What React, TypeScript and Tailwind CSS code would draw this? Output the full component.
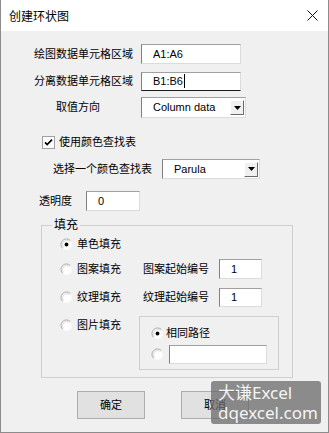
import React from "react";

const FONT = "font-['Liberation_Sans','Noto_Sans_CJK_SC',sans-serif]";

function Radio({ checked = false }: { checked?: boolean }) {
  return (
    <svg width="13" height="13" viewBox="0 0 13 13" className="shrink-0">
      <circle cx="6.5" cy="6.5" r="5.5" fill="#ffffff" />
      <path d="M2.6 10.4 A5.5 5.5 0 0 1 10.4 2.6" stroke="#a8a8a8" strokeWidth="1" fill="none" />
      <path d="M3.4 9.6 A4.4 4.4 0 0 1 9.6 3.4" stroke="#d8d8d8" strokeWidth="1" fill="none" />
      <path d="M10.4 2.6 A5.5 5.5 0 0 1 2.6 10.4" stroke="#f4f4f4" strokeWidth="1" fill="none" />
      {checked && <circle cx="6.5" cy="6.5" r="1.9" fill="#000" />}
    </svg>
  );
}

function Checkbox() {
  return (
    <svg width="13" height="13" viewBox="0 0 13 13" className="shrink-0">
      <rect x="0.5" y="0.5" width="12" height="12" fill="#ffffff" stroke="#a0a0a0" />
      <path d="M3 6.3 L5.2 8.6 L10 3.6" stroke="#000" strokeWidth="1.7" fill="none" />
    </svg>
  );
}

function Field({
  value,
  className,
  focused = false,
}: {
  value: string;
  className: string;
  focused?: boolean;
}) {
  return (
    <div
      className={`flex items-center bg-white border border-t-[#a0a0a0] border-l-[#808080] border-r-[#dcdcdc] ${
        focused ? "border-b-[#1a1a1a]" : "border-b-[#dcdcdc]"
      } pl-[11px] text-[11px] text-black ${className}`}
    >
      <span>{value}</span>
      {focused && <span className="ml-[1px] w-[1px] h-[14px] bg-black" />}
    </div>
  );
}

function Select({ value, className }: { value: string; className: string }) {
  return (
    <div
      className={`flex items-center justify-between bg-white border border-t-[#a0a0a0] border-l-[#808080] border-r-[#dcdcdc] border-b-[#dcdcdc] pl-[11px] pr-[1px] text-[11px] text-black ${className}`}
    >
      <span>{value}</span>
      <div className="w-[14px] h-[15px] bg-[#f0f0f0] border border-t-[#ffffff] border-l-[#ffffff] border-r-[#696969] border-b-[#696969] flex items-center justify-center">
        <svg width="7" height="4" viewBox="0 0 7 4">
          <path d="M0 0 H7 L3.5 4 Z" fill="#000" />
        </svg>
      </div>
    </div>
  );
}

function Button({ label }: { label: string }) {
  return (
    <div className="w-[68px] h-[28px] bg-[#e1e1e1] border border-[#adadad] flex items-center justify-center text-[11px] text-black">
      {label}
    </div>
  );
}

export default function App() {
  return (
    <div
      className={`relative w-[329px] h-[433px] bg-[#f0f0f0] border-x border-b border-[#8c8c8c] flex flex-col ${FONT} text-black`}
    >
      {/* title bar */}
      <div className="h-[31px] bg-white flex items-center justify-between pl-[8px] pr-[10px] shrink-0">
        <span className="text-[12px] font-['Noto_Sans_CJK_SC',sans-serif]">创建环状图</span>
        <svg width="11" height="11" viewBox="0 0 11 11">
          <path d="M0.5 0.5 L10.5 10.5 M10.5 0.5 L0.5 10.5" stroke="#111" strokeWidth="1" />
        </svg>
      </div>

      {/* row 1 */}
      <div className="mt-[13px] h-[20px] flex items-center text-[11px]">
        <div className="w-[132px] text-right">绘图数据单元格区域</div>
        <Field value="A1:A6" className="ml-[8px] w-[100px] h-[20px]" />
      </div>

      {/* row 2 */}
      <div className="mt-[7px] h-[20px] flex items-center text-[11px]">
        <div className="w-[132px] text-right">分离数据单元格区域</div>
        <Field value="B1:B6" focused className="ml-[8px] w-[100px] h-[19px]" />
      </div>

      {/* row 3 */}
      <div className="mt-[6px] h-[21px] flex items-center text-[11px]">
        <div className="w-[140px] pl-[55px]">取值方向</div>
        <Select value="Column data" className="w-[105px] h-[21px]" />
      </div>

      {/* checkbox */}
      <div className="mt-[16px] h-[16px] flex items-center pl-[41px] text-[11px]">
        <Checkbox />
        <span className="ml-[4px]">使用颜色查找表</span>
      </div>

      {/* select colormap */}
      <div className="mt-[9px] h-[20px] flex items-center text-[11px]">
        <div className="w-[161px] pl-[52px]">选择一个颜色查找表</div>
        <Select value="Parula" className="w-[98px] h-[20px]" />
      </div>

      {/* transparency */}
      <div className="mt-[12px] h-[20px] flex items-center text-[11px]">
        <div className="w-[85px] pl-[38px]">透明度</div>
        <Field value="0" className="w-[54px] h-[20px]" />
      </div>

      {/* fill group */}
      <fieldset className="mt-[6px] ml-[40px] w-[252px] border border-[#cfcfcf] pb-[7px] text-[11px]">
        <legend className="ml-[10px] px-[2px] text-[12px] leading-[16px]">填充</legend>

        <div className="mt-[1px] h-[20px] flex items-center pl-[18px]">
          <Radio checked />
          <span className="ml-[4px]">单色填充</span>
        </div>

        <div className="mt-[5px] h-[20px] flex items-center pl-[18px]">
          <div className="w-[83px] flex items-center">
            <Radio />
            <span className="ml-[4px]">图案填充</span>
          </div>
          <div className="w-[66px]">图案起始编号</div>
          <Field value="1" className="ml-[10px] w-[43px] h-[20px]" />
        </div>

        <div className="mt-[8px] h-[20px] flex items-center pl-[18px]">
          <div className="w-[83px] flex items-center">
            <Radio />
            <span className="ml-[4px]">纹理填充</span>
          </div>
          <div className="w-[66px]">纹理起始编号</div>
          <Field value="1" className="ml-[10px] w-[43px] h-[19px]" />
        </div>

        <div className="mt-[9px] flex items-start pl-[18px]">
          <div className="w-[79px] mt-[1px] h-[16px] flex items-center">
            <Radio />
            <span className="ml-[4px]">图片填充</span>
          </div>
          <div className="w-[140px] h-[54px] border border-[#cfcfcf] pl-[11px] pt-[8px] flex flex-col">
            <div className="h-[16px] flex items-center">
              <Radio checked />
              <span className="ml-[2px]">相同路径</span>
            </div>
            <div className="mt-[4px] h-[19px] flex items-center">
              <Radio />
              <Field value="" className="ml-[5px] w-[98px] h-[19px]" />
            </div>
          </div>
        </div>
      </fieldset>

      {/* buttons */}
      <div className="mt-[13px] flex pl-[76px] gap-[36px]">
        <Button label="确定" />
        <Button label="取消" />
      </div>

      {/* watermark overlay */}
      <div className="absolute right-[7px] bottom-[8px] w-[110px] h-[43px] rounded-[3px] bg-[rgba(105,105,105,0.75)] pl-[7px] flex flex-col justify-center text-[#f4f4f4] text-[17px] leading-[20px] font-['Noto_Sans','Noto_Sans_CJK_SC',sans-serif]">
        <span>大谦Excel</span>
        <span>dqexcel.com</span>
      </div>
    </div>
  );
}
